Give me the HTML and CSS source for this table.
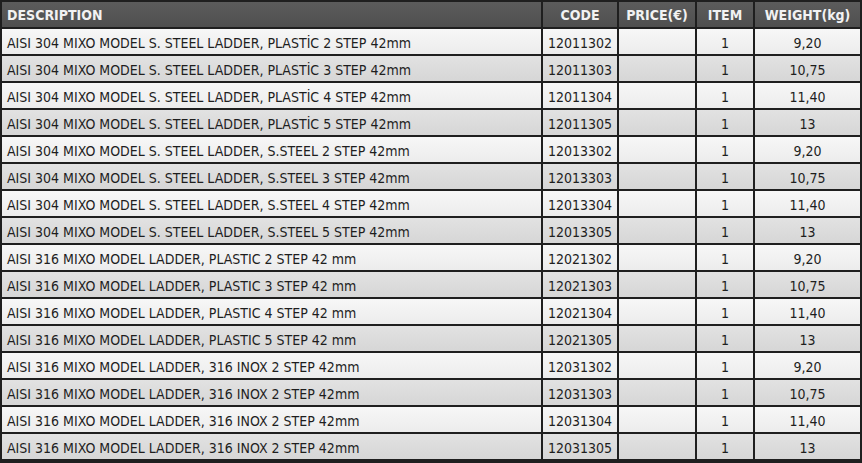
FILE: index.html
```html
<!DOCTYPE html>
<html>
<head>
<meta charset="utf-8">
<link rel="stylesheet" href="styles.css">
</head>
<body>
<table class="price-table">
  <colgroup>
    <col class="c-desc"><col class="c-code"><col class="c-price"><col class="c-item"><col class="c-weight">
  </colgroup>
  <thead>
    <tr><th class="left">DESCRIPTION</th><th>CODE</th><th>PRICE(€)</th><th>ITEM</th><th>WEIGHT(kg)</th></tr>
  </thead>
  <tbody>
    <tr><td class="left">AISI 304 MIXO MODEL S. STEEL LADDER, PLASTİC 2 STEP 42mm</td><td>12011302</td><td></td><td>1</td><td>9,20</td></tr>
    <tr><td class="left">AISI 304 MIXO MODEL S. STEEL LADDER, PLASTİC 3 STEP 42mm</td><td>12011303</td><td></td><td>1</td><td>10,75</td></tr>
    <tr><td class="left">AISI 304 MIXO MODEL S. STEEL LADDER, PLASTİC 4 STEP 42mm</td><td>12011304</td><td></td><td>1</td><td>11,40</td></tr>
    <tr><td class="left">AISI 304 MIXO MODEL S. STEEL LADDER, PLASTİC 5 STEP 42mm</td><td>12011305</td><td></td><td>1</td><td>13</td></tr>
    <tr><td class="left">AISI 304 MIXO MODEL S. STEEL LADDER, S.STEEL 2 STEP 42mm</td><td>12013302</td><td></td><td>1</td><td>9,20</td></tr>
    <tr><td class="left">AISI 304 MIXO MODEL S. STEEL LADDER, S.STEEL 3 STEP 42mm</td><td>12013303</td><td></td><td>1</td><td>10,75</td></tr>
    <tr><td class="left">AISI 304 MIXO MODEL S. STEEL LADDER, S.STEEL 4 STEP 42mm</td><td>12013304</td><td></td><td>1</td><td>11,40</td></tr>
    <tr><td class="left">AISI 304 MIXO MODEL S. STEEL LADDER, S.STEEL 5 STEP 42mm</td><td>12013305</td><td></td><td>1</td><td>13</td></tr>
    <tr><td class="left">AISI 316 MIXO MODEL LADDER, PLASTIC 2 STEP 42 mm</td><td>12021302</td><td></td><td>1</td><td>9,20</td></tr>
    <tr><td class="left">AISI 316 MIXO MODEL LADDER, PLASTIC 3 STEP 42 mm</td><td>12021303</td><td></td><td>1</td><td>10,75</td></tr>
    <tr><td class="left">AISI 316 MIXO MODEL LADDER, PLASTIC 4 STEP 42 mm</td><td>12021304</td><td></td><td>1</td><td>11,40</td></tr>
    <tr><td class="left">AISI 316 MIXO MODEL LADDER, PLASTIC 5 STEP 42 mm</td><td>12021305</td><td></td><td>1</td><td>13</td></tr>
    <tr><td class="left">AISI 316 MIXO MODEL LADDER, 316 INOX 2 STEP 42mm</td><td>12031302</td><td></td><td>1</td><td>9,20</td></tr>
    <tr><td class="left">AISI 316 MIXO MODEL LADDER, 316 INOX 2 STEP 42mm</td><td>12031303</td><td></td><td>1</td><td>10,75</td></tr>
    <tr><td class="left">AISI 316 MIXO MODEL LADDER, 316 INOX 2 STEP 42mm</td><td>12031304</td><td></td><td>1</td><td>11,40</td></tr>
    <tr><td class="left">AISI 316 MIXO MODEL LADDER, 316 INOX 2 STEP 42mm</td><td>12031305</td><td></td><td>1</td><td>13</td></tr>
  </tbody>
</table>
</body>
</html>
```

FILE: styles.css
```css
html, body {
  margin: 0;
  padding: 0;
  background: #1f1f1f;
}

.price-table {
  border-collapse: separate;
  border-spacing: 2px;
  background: #1f1f1f;
  table-layout: fixed;
  width: 862px;
  font-family: "DejaVu Sans Condensed", "DejaVu Sans", sans-serif;
  font-stretch: condensed;
}

.c-desc { width: 539px; }
.c-code { width: 74px; }
.c-price { width: 76px; }
.c-item { width: 56px; }
.c-weight { width: 105px; }

.price-table th,
.price-table td {
  height: 25px;
  padding: 0;
  text-align: center;
  white-space: nowrap;
  overflow: hidden;
  box-sizing: border-box;
}

.price-table th {
  background: linear-gradient(#5c5c5c, #4f4f4f);
  color: #f2f2f2;
  font-weight: bold;
  font-size: 14px;
}

.price-table td {
  color: #1e1e1e;
  font-size: 14px;
  padding-top: 2px;
}

.price-table tbody tr:nth-child(odd) td {
  background: linear-gradient(#f7f7f7, #ececec);
}

.price-table tbody tr:nth-child(even) td {
  background: linear-gradient(#e2e2e2, #d6d6d6);
}

.price-table .left {
  text-align: left;
  padding-left: 5px;
}
```
